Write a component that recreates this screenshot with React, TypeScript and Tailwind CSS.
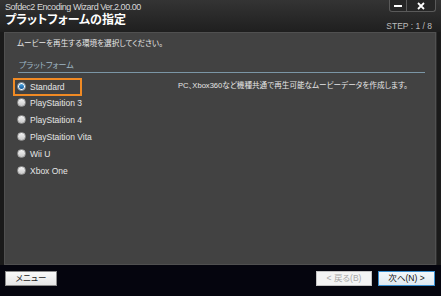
import React from 'react';

const jp = "font-['Liberation_Sans','Noto_Sans_CJK_JP',sans-serif] [font-feature-settings:'palt']";

const platforms = ['Standard', 'PlayStaition 3', 'PlayStaition 4', 'PlayStaition Vita', 'Wii U', 'Xbox One'];

const Radio = ({ checked }: { checked: boolean }) =>
  checked ? (
    <span className="w-[9px] h-[9px] rounded-full border border-[#6b7c8a] bg-white flex items-center justify-center">
      <span className="w-[5px] h-[5px] rounded-full bg-gradient-to-b from-[#4aa3e0] to-[#14589a]" />
    </span>
  ) : (
    <span className="w-[9px] h-[9px] rounded-full border border-[#9a9a9a] bg-gradient-to-b from-[#f4f4f4] to-[#c8c8c8]" />
  );

const App = () => {
  return (
    <div className={`w-[441px] h-[296px] flex flex-col bg-[#1c1c1c] ${jp}`}>
      {/* header */}
      <div className="h-[32px] flex justify-between bg-gradient-to-b from-[#343434] to-[#1f1f1f]">
        <div className="pl-[5px] pt-[2px]">
          <div className="text-[9px] tracking-[-0.45px] leading-[11px] text-[#d8d8d8]">Sofdec2 Encoding Wizard Ver.2.00.00</div>
          <div className="text-[12px] leading-[15px] font-bold text-white">プラットフォームの指定</div>
        </div>
        <div className="flex flex-col items-end">
          <div className="mr-[5px] h-[12px] flex border border-t-0 border-[#5a5a5a] rounded-b-[3px] bg-[#262626]">
            <div className="w-[17px] flex items-center justify-center border-r border-[#5a5a5a]">
              <span className="w-[8px] h-[2px] bg-white" />
            </div>
            <div className="w-[28px] flex items-center justify-center">
              <svg width="8" height="8" viewBox="0 0 8 8">
                <path d="M1 1 L7 7 M7 1 L1 7" stroke="#fff" strokeWidth="1.8" />
              </svg>
            </div>
          </div>
          <div className="mr-[9px] mt-[9px] text-[8.5px] leading-[10px] text-[#bdbdbd] font-['Liberation_Sans',sans-serif]">
            STEP : 1 / 8
          </div>
        </div>
      </div>

      {/* panel */}
      <div className="flex pr-[1px]">
        <div className="w-[4px] bg-[#1a1a1a]" />
        <div className="w-[432px] h-[233px] border border-[#505050] bg-[#424242] flex flex-col">
          <div className="pl-[12px] pt-[5px] text-[7.6px] leading-[12px] text-[#e8e8e8] whitespace-nowrap">
            ムービーを再生する環境を選択してください。
          </div>
          <div className="ml-[13px] mr-[10px] mt-[11px] border-b border-[#7b96a6] pl-[1px] pb-[1px] text-[8px] leading-[10px] text-[#9fb6c4]">
            プラットフォーム
          </div>
          <div className="flex mt-[6px]">
            <div className="pl-[8px] w-[173px] flex flex-col">
              {platforms.map((p, i) => (
                <div
                  key={p}
                  className={`relative flex items-center gap-[4px] pl-[4px] ${i === 0 ? 'h-[15px]' : 'h-[17px]'}`}
                >
                  {i === 0 && (
                    <span className="absolute left-0 -top-[1px] w-[69px] h-[18px] border-2 border-[#f08a24]" />
                  )}
                  <Radio checked={i === 0} />
                  <span className="text-[8.5px] leading-[10px] text-[#e6e6e6]">{p}</span>
                </div>
              ))}
            </div>
            <div className="pt-[1px] text-[7.6px] leading-[12px] text-[#e6e6e6] whitespace-nowrap">
              PC、Xbox360など機種共通で再生可能なムービーデータを作成します。
            </div>
          </div>
        </div>
        <div className="flex-1 bg-[#1a1a1a] border-l border-[#2e2e2e]" />
      </div>

      {/* footer */}
      <div className="flex-1 bg-[#05050e] flex items-start pt-[6px] px-[5px] pr-[6px]">
        <button className="w-[52px] h-[15px] bg-gradient-to-b from-[#fafafa] to-[#e6e6e6] border border-[#8c8c8c] text-[8.5px] leading-[13px] text-[#222]">
          メニュー
        </button>
        <div className="flex-1" />
        <button className="w-[56px] h-[15px] bg-[#f4f4f4] border border-[#c4c4c4] text-[8.5px] leading-[13px] text-[#a8a8a8]">
          &lt; 戻る(B)
        </button>
        <button className="ml-[6px] w-[57px] h-[15px] bg-gradient-to-b from-[#f2f7fb] to-[#dfe9f1] border border-[#3a8fd0] text-[8.5px] leading-[13px] text-[#111]">
          次へ(N) &gt;
        </button>
      </div>
    </div>
  );
};

export default App;
